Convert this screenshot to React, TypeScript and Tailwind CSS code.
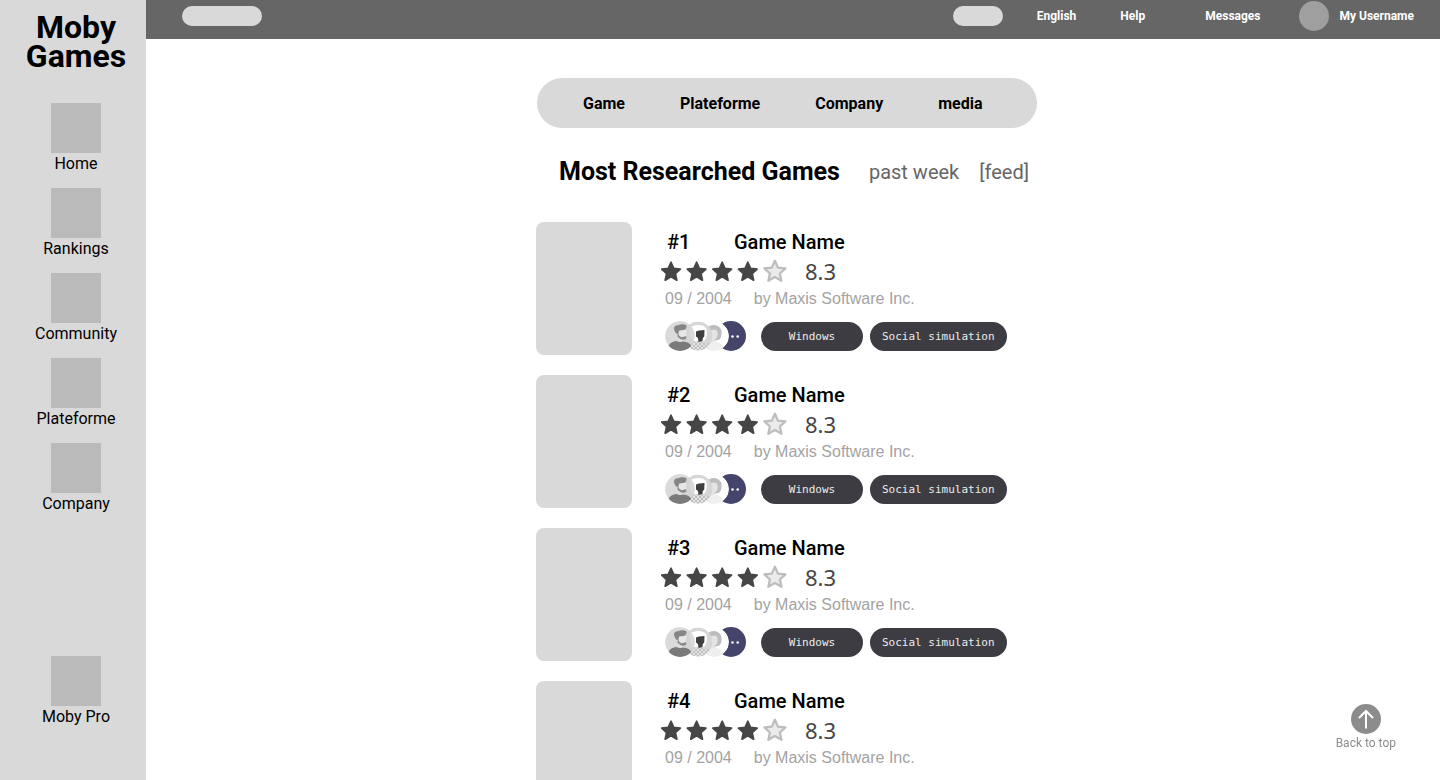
const sidebarLinks = ["Home", "Rankings", "Community", "Plateforme", "Company"];
const sections = ["Game", "Plateforme", "Company", "media"];
const games = [1, 2, 3, 4].map((rank) => ({
  rank,
  name: "Game Name",
  score: "8.3",
  date: "09 / 2004",
  publisher: "by Maxis Software Inc.",
  tags: ["Windows", "Social simulation"],
}));

const STAR =
  "M10 0.8 L12.7 6.9 L19.3 7.6 L14.4 12.1 L15.8 18.6 L10 15.3 L4.2 18.6 L5.6 12.1 L0.7 7.6 L7.3 6.9 Z";

function SidebarLink({ label }: { label: string }) {
  return (
    <a href="#" className="flex flex-col items-center gap-px">
      <span className="size-[50px] bg-[#bababa]" />
      <span className="text-base leading-5">{label}</span>
    </a>
  );
}

function Rating() {
  return (
    <svg role="img" aria-label="4 out of 5 stars" width="128" height="24" viewBox="0 0 128 24" strokeLinejoin="round">
      {[0, 25.6, 51.2, 76.8].map((x) => (
        <path key={x} d={STAR} transform={`translate(${x} 2.5)`} fill="#464646" stroke="#464646" strokeWidth="1.8" />
      ))}
      <path d={STAR} transform="translate(102.6 0.8) scale(1.13)" fill="#ebebeb" stroke="#bdbdbd" strokeWidth="2" />
    </svg>
  );
}

function Collectors({ id }: { id: number }) {
  return (
    <svg role="img" aria-label="Players" width="82" height="30" viewBox="0 0 82 30">
      <defs>
        <clipPath id={`face-a-${id}`}>
          <circle cx="15" cy="15" r="15" />
        </clipPath>
        <clipPath id={`face-b-${id}`}>
          <circle cx="33" cy="15" r="14.5" />
        </clipPath>
        <clipPath id={`face-c-${id}`}>
          <circle cx="49" cy="15" r="15" />
        </clipPath>
        <pattern id={`dots-${id}`} width="4" height="4" patternUnits="userSpaceOnUse">
          <rect width="4" height="4" fill="#e4e4e4" />
          <circle cx="1" cy="1" r="0.8" fill="#8b8b8b" />
          <circle cx="3" cy="3" r="0.8" fill="#8b8b8b" />
        </pattern>
      </defs>
      <circle cx="66" cy="15" r="15" fill="#45446a" />
      <circle cx="67.5" cy="15.5" r="1.3" fill="#fff" />
      <circle cx="72.7" cy="15.5" r="1.3" fill="#fff" />
      <g clipPath={`url(#face-c-${id})`}>
        <circle cx="49" cy="15" r="15" fill="#fff" />
        <path d="M43 6 C47 2.5 54 3.5 56.3 9 C57 12 56.5 16 54.5 18.5 L49 20 L43 18 Z" fill="#bdbdbd" />
        <path d="M46 9.5 C48.5 8 51.5 8 52.5 11 C53.2 14.5 52 17.5 50 18.5 L50 22 L45 22 Z" fill="#e4e4e4" />
        <path d="M41 25 C44 21.5 47 21 50 20.5 C55 21.5 58.5 23.5 59.5 30 L41 30 Z" fill="#efefef" />
      </g>
      <g clipPath={`url(#face-b-${id})`}>
        <circle cx="33" cy="15" r="14.5" fill="#d6d6d6" />
        <path d="M25 6.5 C29 3 38 3 41 7 C42.5 11 42 17 39 20 L28 20 C25 16 24.5 11 25 6.5 Z" fill="#fff" />
        <path d="M31 10.5 L34 9.5 L39.5 9 L39.3 15.5 L37.8 17 L37.5 20 L33.5 21 L33 17 L31 15.5 Z" fill="#3f3f3f" />
        <path d="M25 22.5 C29 20.5 38 20.5 44 22.5 L44 30 L23 30 Z" fill={`url(#dots-${id})`} />
      </g>
      <g clipPath={`url(#face-a-${id})`}>
        <circle cx="15" cy="15" r="15" fill="#d3d3d3" fillOpacity="0.85" />
        <path d="M12.5 9 L21 8.5 L21.5 16 L19 17 L13 16 Z" fill="#e6e6e6" />
        <path
          d="M9.2 9 C8.5 5.5 10.5 4.2 13 4.2 C16 2.8 19 3.4 21.3 4 C22 6.5 21 8.8 18.5 9 L14.2 9.6 L13.2 13 L11 12.6 Z"
          fill="#858585"
        />
        <path d="M13 12 L14.6 15.2 L17 16.2 L21.3 15 L21.2 17.8 C18.5 19.6 14.6 18.6 12.4 15.5 Z" fill="#8a8a8a" />
        <path d="M12 16.5 L16.5 19 L17 22 L11.5 21 Z" fill="#dedede" />
        <path d="M3 27.5 C3.5 22.5 7 20.6 11.5 20 C14 21.4 16 21.2 17.5 20.4 C22.5 20.8 26.5 22.5 27 27 L24 30 L5 30 Z" fill="#7a7a7a" />
      </g>
    </svg>
  );
}

function GameRow({ game }: { game: (typeof games)[number] }) {
  return (
    <li className="flex gap-[29px]">
      <div className="h-[133px] w-24 shrink-0 rounded-lg bg-[#d9d9d9]" />
      <div className="flex flex-col pt-2">
        <h2 className="flex pl-[6px] text-xl leading-6 font-medium">
          <span className="w-[67px]">#{game.rank}</span>
          <a href="#">{game.name}</a>
        </h2>
        <div className="mt-[5px] flex h-6 items-center gap-4">
          <Rating />
          <span className="font-['Noto_Sans'] text-[22px] leading-6 text-[#464646]">{game.score}</span>
        </div>
        <p className="mt-1 flex gap-[22px] pl-1 font-['Liberation_Sans'] text-base leading-6 text-[#a3a3a3]">
          <span>{game.date}</span>
          <span>{game.publisher}</span>
        </p>
        <div className="mt-[10px] flex items-end pl-1">
          <Collectors id={game.rank} />
          <ul className="ml-[14px] flex gap-[7px] font-['DejaVu_Sans_Mono','Liberation_Mono',monospace] text-[11px] leading-[29px] text-[#ededed]">
            {game.tags.map((tag) => (
              <li key={tag} className="min-w-[102px] rounded-full bg-[#3c3c42] px-3 text-center whitespace-nowrap">
                {tag}
              </li>
            ))}
          </ul>
        </div>
      </div>
    </li>
  );
}

export default function App() {
  return (
    <div className="flex h-screen overflow-hidden bg-white font-[Roboto,sans-serif] text-black">
      <aside className="flex w-[146px] shrink-0 flex-col items-center bg-[#d9d9d9] pt-[13px] pb-[53px] pl-[6px]">
        <a href="#" className="text-center text-[32px] leading-[29px] font-bold">
          Moby
          <br />
          Games
        </a>
        <nav aria-label="Main" className="mt-8 flex flex-col gap-[14px]">
          {sidebarLinks.map((label) => (
            <SidebarLink key={label} label={label} />
          ))}
        </nav>
        <div className="mt-auto">
          <SidebarLink label="Moby Pro" />
        </div>
      </aside>

      <div className="flex min-w-0 flex-1 flex-col">
        <header className="flex h-[39px] shrink-0 items-center bg-[#666666] pr-[26px] pb-[7px] pl-9 text-xs font-bold text-white">
          <button aria-label="Search" className="h-5 w-20 rounded-full bg-[#d9d9d9]" />
          <button aria-label="Theme" className="ml-auto h-5 w-[50px] rounded-full bg-[#d9d9d9]" />
          <nav aria-label="Account" className="ml-[34px] flex items-center gap-11">
            <a href="#">English</a>
            <a href="#">Help</a>
            <a href="#" className="ml-4">Messages</a>
          </nav>
          <a href="#" className="ml-[39px] flex items-center gap-[10px]">
            <span className="size-[30px] rounded-full bg-[#9f9f9f]" />
            My Username
          </a>
        </header>

        <main className="flex-1 overflow-y-auto pt-[39px] pr-3 [scrollbar-width:none]">
          <div className="mx-auto flex w-full max-w-[500px] flex-col">
            <nav aria-label="Sections" className="flex h-[50px] items-center gap-[55px] rounded-full bg-[#d9d9d9] pt-[2px] pl-[46px] text-base font-bold">
              {sections.map((label) => (
                <a key={label} href="#">
                  {label}
                </a>
              ))}
            </nav>
            <div className="mt-7 flex items-center pl-[22px] text-xl leading-8 whitespace-nowrap text-[#666666]">
              <h1 className="text-[25px] font-bold text-black">Most Researched Games</h1>
              <a href="#" className="ml-[29px]">past week</a>
              <a href="#" className="ml-5">[feed]</a>
            </div>
            <ul className="mt-[34px] -ml-px flex flex-col gap-5">
              {games.map((game) => (
                <GameRow key={game.rank} game={game} />
              ))}
            </ul>
          </div>
        </main>
      </div>

      <a href="#" className="fixed right-11 bottom-[29px] flex flex-col items-center gap-[1px] text-xs text-[#8c8c8c]">
        <svg width="30" height="30" viewBox="0 0 30 30" fill="none" aria-hidden="true">
          <circle cx="15" cy="15" r="15" fill="#8c8c8c" />
          <path d="M15 24.5V7M8 14L15 7L22 14" stroke="#fff" strokeWidth="2" />
        </svg>
        Back to top
      </a>
    </div>
  );
}
